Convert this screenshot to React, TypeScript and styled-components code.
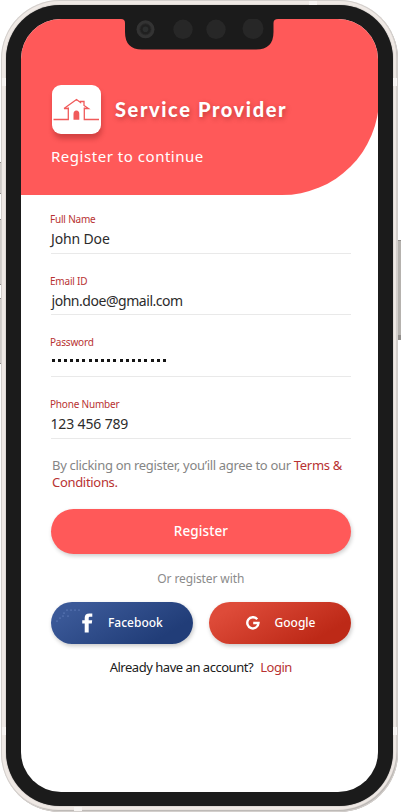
import React from "react";
import styled, { createGlobalStyle } from "styled-components";

const GlobalStyle = createGlobalStyle`
  *, *::before, *::after { box-sizing: border-box; }
  html, body { margin: 0; padding: 0; background: #fff; overflow: hidden; }
  body { font-family: "Noto Sans", "Open Sans", sans-serif; }
`;

const Stage = styled.main`
  position: relative;
  width: 401px;
  height: 812px;
  padding: 0 3px 0 1px;
  overflow: hidden;
`;

const Frame = styled.div`
  position: relative;
  height: 812px;
  padding: 5px 5px 6px 5px;
  border-radius: 59px;
  background: #efe9e5;
  box-shadow: inset 0 0 0 1px #d3cfcc, inset -1.5px -2px 1px #b9b5b2;
`;

const Bezel = styled.div`
  height: 100%;
  padding: 14px 15px 14px 15px;
  border-radius: 54px;
  background: #1b1b1b;
  box-shadow: 0 0 1px #555;
`;

const Screen = styled.div`
  position: relative;
  height: 773px;
  overflow: hidden;
  border-radius: 40px;
  background: #fff;
`;

const SideKey = styled.span<{ $top: number; $height: number; $right?: boolean }>`
  position: absolute;
  top: ${(p) => p.$top}px;
  ${(p) => (p.$right ? "right: 0; width: 4px;" : "left: 0; width: 2px;")}
  height: ${(p) => p.$height}px;
  background: ${(p) => (p.$right ? "#b5b2ae" : "#cfcbc8")};
  border-top: 1px solid #918e8b;
  border-bottom: ${(p) => (p.$right ? 5 : 1)}px solid #918e8b;
`;

const Antenna = styled.span<{ $x: number; $y: number; $w: number; $h: number }>`
  position: absolute;
  left: ${(p) => p.$x}px;
  top: ${(p) => p.$y}px;
  width: ${(p) => p.$w}px;
  height: ${(p) => p.$h}px;
  background: #f7f4f2;
`;

const NotchSvg = styled.svg`
  position: absolute;
  top: 0;
  left: 100px;
`;

const Header = styled.header`
  width: 358px;
  height: 175.5px;
  padding: 65.5px 0 0 31px;
  background: #ff5959;
  border-bottom-right-radius: 97px;
`;

const Brand = styled.div`
  display: flex;
  align-items: center;
  height: 49px;
`;

const Logo = styled.div`
  width: 49px;
  height: 49px;
  flex: none;
  border-radius: 9px;
  background: #fff;
  box-shadow: 1px 5px 5px rgba(120, 20, 20, 0.32);
`;

const Title = styled.h1`
  margin: 0 0 0 14px;
  color: #fff;
  font: 900 20px/28px Lato, sans-serif;
  letter-spacing: 1.6px;
  white-space: nowrap;
  text-shadow: 1px 2px 5px rgba(110, 20, 20, 0.4);
`;

const Subtitle = styled.p`
  margin: 11px 0 0 -1px;
  color: #fff;
  font-size: 15px;
  line-height: 22px;
  letter-spacing: 0.53px;
`;

const Form = styled.form`
  display: flex;
  flex-direction: column;
  padding: 15.5px 27px 0 29.5px;
`;

const Field = styled.label`
  display: flex;
  flex-direction: column;
  height: 43.7px;
  margin-bottom: 18px;
  border-bottom: 1px solid #e9e9e9;
`;

const FieldLabel = styled.span`
  height: 18px;
  margin-left: -0.5px;
  color: #b83232;
  font-size: 10px;
  line-height: 18px;
  letter-spacing: -0.2px;
`;

const FieldValue = styled.span<{ $spacing: number; $indent: number }>`
  height: 22px;
  padding-left: ${(p) => p.$indent}px;
  color: #2b2b2b;
  font-size: 14px;
  line-height: 22px;
  letter-spacing: ${(p) => p.$spacing}px;
  white-space: nowrap;
`;

const Dots = styled.span`
  display: flex;
  gap: 3.2px;
  padding: 8px 0 0 1px;
`;

const Dot = styled.i`
  width: 3px;
  height: 3px;
  background: #151515;
`;

const Terms = styled.p`
  margin: 0 0 0 1.5px;
  color: #858585;
  font-size: 13px;
  line-height: 17px;
  letter-spacing: -0.31px;
  white-space: nowrap;
`;

const Accent = styled.span`
  color: #b83232;
`;

const RegisterButton = styled.button`
  width: 300px;
  height: 45px;
  margin: 18px 0 0 0.5px;
  padding: 0;
  border: 0;
  border-radius: 23px;
  background: #ff5959;
  color: #fff;
  font: 500 13.5px/45px "Noto Sans", sans-serif;
  letter-spacing: 0.1px;
  box-shadow: 1px 2px 4px rgba(0, 0, 0, 0.2);
`;

const Divider = styled.p`
  margin: 14px 0 0;
  color: #8b8b8b;
  font-size: 12px;
  line-height: 22px;
  letter-spacing: -0.1px;
  text-align: center;
`;

const SocialRow = styled.div`
  display: flex;
  gap: 16px;
  margin: 12px 0 0 0.5px;
`;

const SocialButton = styled.button<{ $from: string; $to: string; $pad: number; $gap: number }>`
  display: flex;
  align-items: center;
  gap: ${(p) => p.$gap}px;
  width: 142px;
  flex: none;
  height: 42px;
  padding: 0 0 0 ${(p) => p.$pad}px;
  border: 0;
  border-radius: 21px;
  color: #fff;
  font: 500 12px/42px "Noto Sans", sans-serif;
  background: linear-gradient(150deg, ${(p) => p.$from} 15%, ${(p) => p.$to} 80%);
  box-shadow: 1px 2px 4px rgba(0, 0, 0, 0.22);
`;

const LoginLine = styled.p`
  margin: 12px 0 0;
  color: #202020;
  font-size: 13px;
  line-height: 22px;
  letter-spacing: -0.47px;
  text-align: center;
  white-space: nowrap;
`;

const LoginLink = styled(Accent)`
  margin-left: 7px;
`;

const Notch = () => (
  <NotchSvg width="157" height="32" viewBox="0 0 157 32">
    <path d="M0 0H157Q152.500 0 152.500 4V13Q152.500 30.500 135 30.500H21Q4 30.500 4 13V4Q4 0 0 0Z" fill="#1b1b1b" />
    <circle cx="24.500" cy="10.300" r="9" fill="#333" />
    <circle cx="24.500" cy="10.300" r="5.500" fill="#202020" stroke="#292929" />
    <circle cx="24.500" cy="10.300" r="2.800" fill="#2c2e2e" />
    <circle cx="62" cy="10.300" r="9.700" fill="#272727" />
    <circle cx="95" cy="10.300" r="9.700" fill="#272727" />
    <circle cx="132" cy="9.500" r="10.500" fill="#272727" />
  </NotchSvg>
);

const HouseIcon = () => (
  <svg width="49" height="49" viewBox="0 0 49 49" fill="none" stroke="#f05a5a" strokeWidth="1.300">
    <path d="M1.500 34.500H16.300V22.500M32.300 22.500V34.500H47" />
    <path d="M12 23.500L24.500 14.500L28.500 17.500V16.500H32V20.500L36.500 23.500H32.500M12 23.500H16.500" />
    <path d="M21.500 34.800V29Q21.500 25.500 24.400 25.500Q27.300 25.500 27.300 29V34.800Z" fill="#f05a5a" stroke="none" />
  </svg>
);

const FacebookIcon = () => (
  <svg width="11" height="20" viewBox="0 0 11 20" fill="#fff">
    <path d="M2.700 19.500V10.500H.2V7.200H2.700V4.800C2.700 1.900 4.400.5 7.300.5H10.300V3.800H8.200C7 3.800 6.700 4.300 6.700 5.300V7.200H10.200L9.800 10.500H6.700V19.500Z" />
  </svg>
);

const GoogleIcon = () => (
  <svg width="14" height="14" viewBox="0 0 14 14" fill="none" stroke="#fff" strokeWidth="2.400">
    <path d="M11.200 3.200A5.600 5.600 0 1 0 12.500 7H7.200" />
  </svg>
);

const dotTexture = [[6, 19], [9, 16], [12, 14], [13, 11], [17, 14], [20, 8], [24, 8], [28, 8], [16, 8]];

const TextureSvg = styled.svg`
  position: absolute;
  left: 0;
  top: 0;
`;

const TexturedButton = styled(SocialButton)`
  position: relative;
`;

const fields = [
  { label: "Full Name", value: "John Doe", spacing: -0.15, indent: 0.5 },
  { label: "Email ID", value: "john.doe@gmail.com", spacing: -0.46, indent: 1 },
  { label: "Password", value: "", spacing: 0, indent: 1 },
  { label: "Phone Number", value: "123 456 789", spacing: -0.15, indent: 0 },
];

export default function App() {
  return (
    <>
      <GlobalStyle />
      <Stage>
        <SideKey $top={162} $height={32} />
        <SideKey $top={219} $height={66} />
        <SideKey $top={298} $height={66} />
        <SideKey $top={240} $height={100} $right />
        <Frame>
          <Antenna $x={308} $y={1} $w={8} $h={4} />
          <Antenna $x={73} $y={807} $w={8} $h={4} />
          <Antenna $x={1} $y={78} $w={4} $h={8} />
          <Antenna $x={1} $y={727} $w={4} $h={8} />
          <Antenna $x={392} $y={78} $w={4} $h={8} />
          <Antenna $x={392} $y={727} $w={4} $h={8} />
          <Bezel>
            <Screen>
              <Header>
                <Brand>
                  <Logo><HouseIcon /></Logo>
                  <Title>Service Provider</Title>
                </Brand>
                <Subtitle>Register to continue</Subtitle>
              </Header>
              <Notch />
              <Form>
                {fields.map((f) => (
                  <Field key={f.label}>
                    <FieldLabel>{f.label}</FieldLabel>
                    {f.value ? (
                      <FieldValue $spacing={f.spacing} $indent={f.indent}>{f.value}</FieldValue>
                    ) : (
                      <Dots>{Array.from({ length: 19 }, (_, i) => <Dot key={i} />)}</Dots>
                    )}
                  </Field>
                ))}
                <Terms>
                  By clicking on register, you’ill agree to our <Accent>Terms &amp;<br />Conditions.</Accent>
                </Terms>
                <RegisterButton type="button">Register</RegisterButton>
                <Divider>Or register with</Divider>
                <SocialRow>
                  <TexturedButton type="button" $from="#3b5998" $to="#213d78" $pad={31} $gap={15}>
                    <TextureSvg width="40" height="30" fill="#7f99d6">
                      {dotTexture.map(([x, y]) => <circle key={`${x}-${y}`} cx={x} cy={y} r=".6" />)}
                    </TextureSvg>
                    <FacebookIcon />
                    Facebook
                  </TexturedButton>
                  <SocialButton type="button" $from="#de4b39" $to="#bd2917" $pad={37} $gap={14.5}>
                    <GoogleIcon />
                    Google
                  </SocialButton>
                </SocialRow>
                <LoginLine>
                  Already have an account?<LoginLink>Login</LoginLink>
                </LoginLine>
              </Form>
            </Screen>
          </Bezel>
        </Frame>
      </Stage>
    </>
  );
}
